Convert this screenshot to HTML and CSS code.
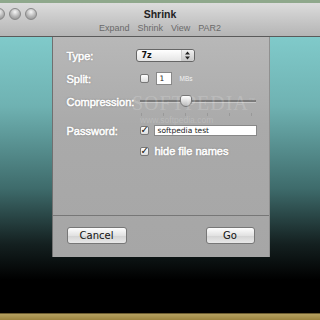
FILE: index.html
```html
<!DOCTYPE html>
<html lang="en">
<head>
    <meta charset="UTF-8">
    <title>Shrink</title>
    <link rel="stylesheet" href="styles.css">
</head>
<body>
    <div class="topstrip"></div>
    <div class="titlebar">
        <div class="lights">
            <span class="light"></span>
            <span class="light"></span>
            <span class="light"></span>
        </div>
        <div class="title">Shrink</div>
        <div class="toolbar">
            <span>Expand</span>
            <span>Shrink</span>
            <span>View</span>
            <span>PAR2</span>
        </div>
    </div>

    <div class="desktop">
        <div class="sheet">
            <div class="form">
                <div class="row">
                    <label class="lbl">Type:</label>
                    <div class="popup">
                        <span>7z</span>
                        <span class="arrows">
                            <svg width="7" height="9" viewBox="0 0 7 9"><path d="M3.5 0.5 L6 3.5 L1 3.5 Z M3.5 8.5 L6 5.5 L1 5.5 Z" fill="#222"/></svg>
                        </span>
                    </div>
                </div>
                <div class="row">
                    <label class="lbl">Split:</label>
                    <span class="check"></span>
                    <span class="field small">1</span>
                    <span class="unit">MBs</span>
                </div>
                <div class="row slider-row">
                    <label class="lbl">Compression:</label>
                    <div class="slider">
                        <div class="track"></div>
                        <div class="thumb"></div>
                        <div class="ticks">
                            <i></i><i></i><i></i><i></i><i></i><i></i>
                        </div>
                    </div>
                </div>
                <div class="row">
                    <label class="lbl">Password:</label>
                    <span class="check on">&#10003;</span>
                    <span class="field wide">softpedia test</span>
                </div>
                <div class="row last">
                    <span class="lbl"></span>
                    <span class="check on">&#10003;</span>
                    <span class="opt">hide file names</span>
                </div>
            </div>
            <div class="buttons">
                <button class="btn cancel">Cancel</button>
                <button class="btn go">Go</button>
            </div>
        </div>
        <div class="mark">SOFTPEDIA<sup>&trade;</sup><small>www.softpedia.com</small></div>
    </div>

    <div class="gold"></div>
</body>
</html>
```

FILE: styles.css
```css
body {
    margin: 0;
    width: 320px;
    height: 320px;
    overflow: hidden;
    background: #000;
    font-family: "DejaVu Sans", "Liberation Sans", sans-serif;
}

.topstrip {
    height: 3px;
    background: #8fa88c;
}

.titlebar {
    position: relative;
    height: 33px;
    background: linear-gradient(#dcdcdc, #c4c4c4 60%, #b5b5b5);
    border-bottom: 1px solid #5a5a5a;
    text-align: center;
}

.lights {
    position: absolute;
    left: -7px;
    top: 5px;
    display: flex;
    gap: 4px;
}

.light {
    width: 10px;
    height: 10px;
    border-radius: 50%;
    background: radial-gradient(circle at 50% 30%, #f6f6f6, #b4b4b4 55%, #8a8a8a);
    border: 1px solid #888;
}

.title {
    padding-top: 4px;
    font-family: "Liberation Sans", sans-serif;
    font-size: 10.5px;
    font-weight: bold;
    color: #222;
    line-height: 14px;
}

.toolbar {
    display: flex;
    justify-content: center;
    gap: 8px;
    margin-top: 1px;
    font-family: "Liberation Sans", sans-serif;
    font-size: 9px;
    color: #6a6a6a;
    line-height: 12px;
}

.desktop {
    position: relative;
    height: 276px;
    background: linear-gradient(#80caca, #6fb2b2 25%, #3e6b6b 55%, #142020 75%, #000 88%);
    display: flex;
    justify-content: center;
    padding-left: 1px;
}

.sheet {
    width: 216px;
    height: 220px;
    background: linear-gradient(#b8b8b8, #aaaaaa 40%, #a6a6a6);
    border-left: 1px solid #707070;
    border-right: 1px solid #909090;
    display: flex;
    flex-direction: column;
}

.form {
    height: 179px;
    padding: 7px 0 0 14px;
    border-bottom: 1px solid #777;
    box-sizing: border-box;
}

.row {
    display: flex;
    align-items: center;
    height: 23px;
}

.row.last {
    height: 18px;
}

.lbl {
    width: 73px;
    flex-shrink: 0;
    font-family: "Liberation Sans", sans-serif;
    font-size: 11px;
    color: #fff;
    -webkit-text-stroke: 0.5px #fff;
    text-shadow: 0 0 2px #666;
}

.popup {
    width: 52px;
    height: 11px;
    margin-left: -4px;
    border: 1px solid #666;
    border-radius: 3px;
    background: linear-gradient(#fff, #e4e4e4);
    display: flex;
    align-items: center;
    justify-content: space-between;
    padding-left: 5px;
    font-size: 8px;
    font-weight: bold;
    color: #111;
    box-sizing: content-box;
}

.arrows {
    width: 12px;
    height: 11px;
    border-left: 1px solid #ccc;
    border-radius: 0 3px 3px 0;
    background: linear-gradient(#f0f0f0, #c8c8c8);
    display: flex;
    align-items: center;
    justify-content: center;
}

.check {
    width: 7px;
    height: 7px;
    flex-shrink: 0;
    border: 1px solid #777;
    border-radius: 2px;
    background: linear-gradient(#fff, #ddd);
    font-size: 10px;
    line-height: 6px;
    color: #111;
    font-weight: bold;
}

.field {
    margin-left: 7px;
    background: #fff;
    border: 1px solid #888;
    font-size: 7.5px;
    color: #222;
    height: 11px;
    line-height: 10px;
    padding-left: 3px;
    box-sizing: border-box;
}

.small {
    width: 16px;
    height: 13px;
    line-height: 12px;
}

.wide {
    width: 103px;
    margin-left: 5px;
}

.unit {
    margin-left: 8px;
    font-family: "Liberation Sans", sans-serif;
    font-size: 6.5px;
    color: #f2f2f2;
}

.slider-row {
    margin-bottom: 6px;
}

.slider {
    position: relative;
    width: 116px;
    height: 23px;
}

.track {
    position: absolute;
    left: 0;
    right: 0;
    top: 10px;
    height: 2px;
    background: #7a7a7a;
    border-bottom: 1px solid #c8c8c8;
}

.thumb {
    position: absolute;
    left: 40px;
    top: 5px;
    width: 10px;
    height: 10px;
    background: linear-gradient(#fff, #bbb);
    border: 1px solid #777;
    border-radius: 3px 3px 50% 50%;
}

.ticks {
    position: absolute;
    left: 1px;
    right: 3px;
    top: 23px;
    display: flex;
    justify-content: space-between;
}

.ticks i {
    width: 1px;
    height: 3px;
    background: #999;
}

.opt {
    margin-left: 6px;
    font-family: "Liberation Sans", sans-serif;
    font-size: 11px;
    color: #fff;
    -webkit-text-stroke: 0.5px #fff;
    text-shadow: 0 0 2px #666;
}

.buttons {
    display: flex;
    justify-content: space-between;
    padding: 11px 14px 0 14px;
}

.btn {
    height: 17px;
    border: 1px solid #777;
    border-radius: 3px;
    background: linear-gradient(#fdfdfd, #e2e2e2 50%, #d2d2d2 51%, #e8e8e8);
    font-family: "DejaVu Sans", sans-serif;
    font-size: 10px;
    color: #111;
    padding: 0;
    line-height: 15px;
}

.cancel {
    width: 60px;
}

.go {
    width: 49px;
}

.mark {
    position: absolute;
    left: 132px;
    top: 54px;
    font-family: "Liberation Serif", serif;
    font-size: 20px;
    letter-spacing: 1px;
    color: rgba(255, 255, 255, 0.18);
    line-height: 18px;
}

.mark sup {
    font-size: 6px;
}

.mark small {
    display: block;
    font-family: "Liberation Sans", sans-serif;
    font-size: 8.5px;
    letter-spacing: 0;
    margin: 4px 0 0 8px;
    line-height: 9px;
    color: rgba(255, 255, 255, 0.18);
}

.gold {
    height: 6px;
    background: linear-gradient(#b4a060, #9c8440);
    border-top: 1px solid #6c5c30;
}
```
